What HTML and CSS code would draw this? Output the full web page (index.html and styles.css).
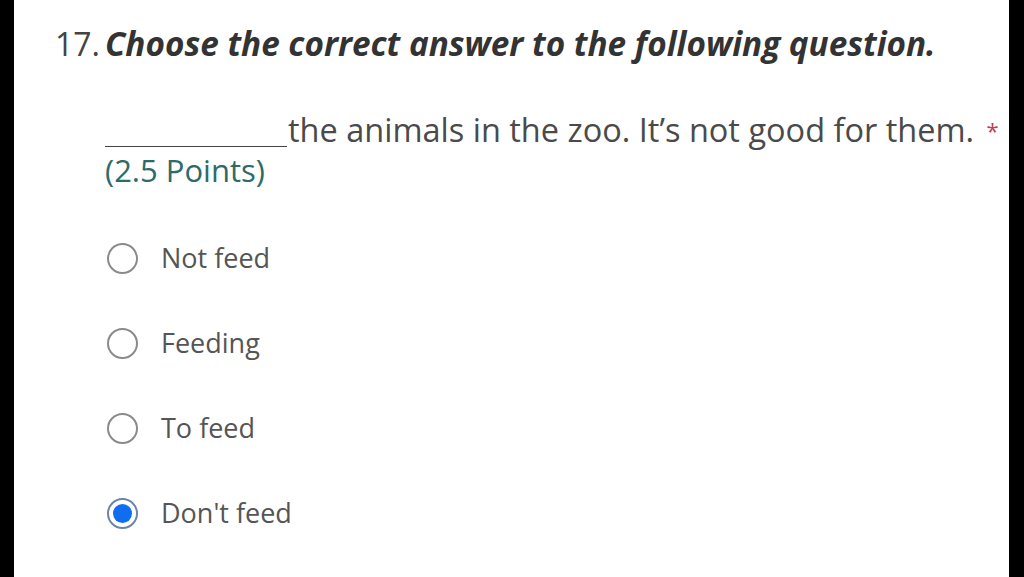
FILE: index.html
```html
<!DOCTYPE html>
<html lang="en">
<head>
    <meta charset="UTF-8">
    <meta name="viewport" content="width=device-width, initial-scale=1.0">
    <title>Question 17</title>
    <link rel="stylesheet" href="styles.css">
</head>
<body>
    <div class="frame">
        <div class="question">
            <div class="title">
                <span class="number">17.</span>
                <span class="heading">Choose the correct answer to the following question.</span>
            </div>

            <div class="body">
                <div class="prompt">
                    <span class="blank"></span>the animals in the zoo. It’s not good for them.
                    <span class="required">*</span>
                </div>
                <div class="points">(2.5 Points)</div>

                <div class="options">
                    <label class="option">
                        <span class="radio"></span>
                        <span class="label">Not feed</span>
                    </label>
                    <label class="option">
                        <span class="radio"></span>
                        <span class="label">Feeding</span>
                    </label>
                    <label class="option">
                        <span class="radio"></span>
                        <span class="label">To feed</span>
                    </label>
                    <label class="option checked">
                        <span class="radio"></span>
                        <span class="label">Don't feed</span>
                    </label>
                </div>
            </div>
        </div>
    </div>
</body>
</html>
```

FILE: styles.css
```css
html, body {
    margin: 0;
    padding: 0;
    height: 100%;
    background-color: #000;
    font-family: "Open Sans", Arial, sans-serif;
}

.frame {
    margin-left: 14px;
    width: 995px;
    height: 100%;
    background-color: #fff;
    overflow: hidden;
}

.question {
    padding: 20px 0 0 41px;
}

.title {
    display: flex;
    align-items: baseline;
    gap: 5px;
    color: #333;
}

.number {
    font-size: 32px;
    color: #444;
}

.heading {
    font-size: 33.3px;
    font-weight: bold;
    font-style: italic;
    color: #333;
}

.body {
    padding-left: 50px;
    margin-top: 44px;
}

.prompt {
    font-size: 32.5px;
    color: #4a4a4a;
    line-height: 40px;
}

.blank {
    display: inline-block;
    width: 182px;
    border-bottom: 1px solid #444;
    margin-right: 1px;
    vertical-align: -5px;
}

.required {
    color: #c43d4b;
    font-size: 22px;
    vertical-align: top;
    margin-left: 4px;
}

.points {
    font-size: 31px;
    color: #2e6b68;
    line-height: 40px;
}

.options {
    margin-top: 51px;
    display: flex;
    flex-direction: column;
    gap: 51px;
}

.option {
    display: flex;
    align-items: center;
    gap: 23px;
    margin-left: 2px;
}

.radio {
    width: 31px;
    height: 31px;
    border: 2px solid #8a8a8a;
    border-radius: 50%;
    box-sizing: border-box;
    flex-shrink: 0;
    position: relative;
}

.option.checked .radio {
    border-color: #6d84a8;
}

.option.checked .radio::after {
    content: "";
    position: absolute;
    top: 4px;
    left: 4px;
    width: 19px;
    height: 19px;
    border-radius: 50%;
    background-color: #0f6ef0;
}

.label {
    font-size: 27px;
    color: #555;
    line-height: 34px;
}
```
